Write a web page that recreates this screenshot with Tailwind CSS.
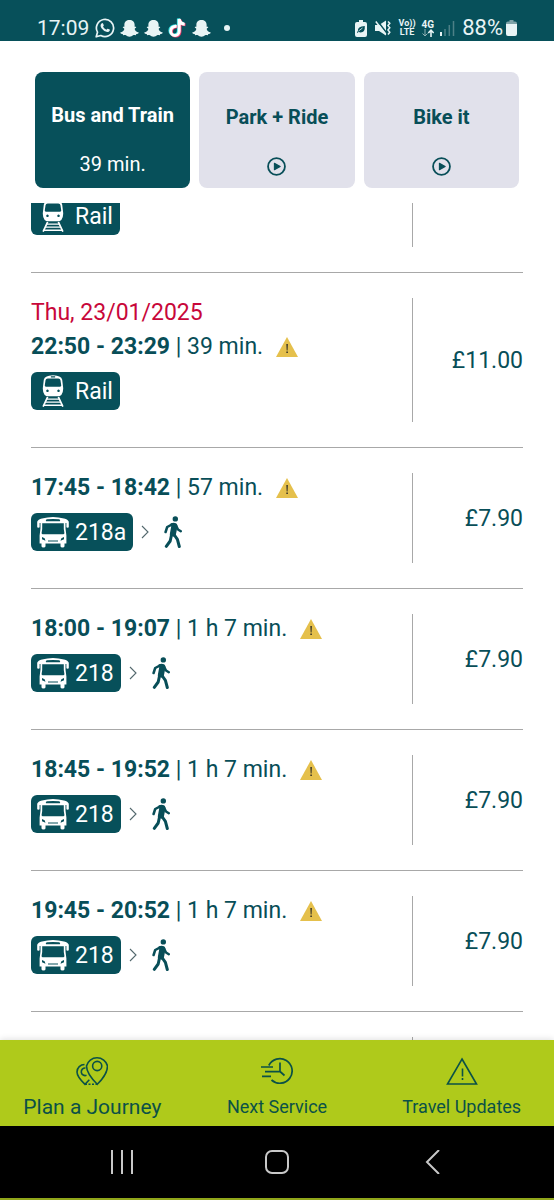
<!DOCTYPE html>
<html lang="en">
<head>
<meta charset="utf-8">
<meta name="viewport" content="width=device-width, initial-scale=1">
<title>Journey results</title>
<script src="https://cdn.jsdelivr.net/npm/@tailwindcss/browser@4"></script>
</head>
<body class="flex h-screen flex-col bg-white font-['Roboto',sans-serif] text-[#084e58]">

<svg class="hidden" aria-hidden="true">
  <symbol id="ghost" viewBox="0 0 20 20"><path fill="currentColor" d="M10 1c3.200 0 5.400 2 5.400 5v2.200c.6.2 1.300-.3 1.600.2.300.8-1.400 1.200-1.600 2 .5 1.900 2 3.200 4.300 3.800.4.900-1.800 1.500-2.500 1.700-.3.500-.2 1-.7 1.100-.8.100-1.700-.3-2.800.2-.9.600-2 1.500-3.700 1.500s-2.800-.9-3.700-1.500c-1.100-.5-2-.1-2.800-.2-.5-.1-.4-.6-.7-1.100-.7-.2-2.900-.8-2.500-1.700 2.300-.6 3.800-1.900 4.300-3.800-.2-.8-1.900-1.200-1.600-2 .3-.5 1 0 1.600-.2V6c0-3 2.200-5 5.400-5z"/></symbol>
  <symbol id="note" viewBox="0 0 18 20"><path fill="none" stroke="currentColor" stroke-width="3" d="M8.500 8.300C4.900 8 2.500 10.300 2.500 13s1.900 4.500 4.300 4.500S11 15.700 11 13V1c.4 3.200 2.500 5 5.500 5.200"/></symbol>
  <symbol id="train" viewBox="0 0 22 33"><path fill="#fff" fill-rule="evenodd" d="M7 .8Q11-.4 15 .8l2.500.7Q20 2.300 20.500 5l1 8.500q.2 4.500-1.900 7Q18.500 22 15.500 22h-9q-3 0-4.100-1.500Q.3 18 .5 13.500L1.500 5Q2 2.300 4.500 1.500zM5.500 3.700Q3.600 3.800 3.300 5.500L2.500 10.800q0 1.200 1.200 1.200h14.600q1.200 0 1.200-1.200l-.8-5.300q-.3-1.700-2.200-1.800zM8.800 1.400v1.200h4.400V1.400zM5.300 15a1.300 1.300 0 1 0 .01 0zM16.700 15a1.300 1.300 0 1 0 .01 0z"/><path fill="none" stroke="#fff" stroke-width="1.700" d="M5.500 22.500.8 32.700M16.500 22.500l4.700 10.200"/><path fill="none" stroke="#fff" stroke-width="1.300" d="M4.500 24.800h13M3 27.900h16M1.300 31.200h19.400"/></symbol>
  <symbol id="bus" viewBox="0 0 32 31"><path fill="#fff" fill-rule="evenodd" d="M5 2Q16-1.200 27 2q4 .8 4.800 3.300V10.500q0 .8-1.200.8t-1.200-.8V6.500h-.9V12l.9 7v8H27.500v2.700q0 1.300-2 1.300t-2-1.300V27h-15v2.700Q8.500 31 6.500 31t-2-1.300V27H2.600v-8l.9-7V6.500h-.9v4q0 .8-1.200.8t-1.200-.8V5.300Q1 2.800 5 2zM10 2.800q-1.200.2-1.200 1.100t1.200.9h12q1.200 0 1.200-.9T22 2.800Q16 2 10 2.800zM5.200 6.700v5.800L4.600 16.500q0 1.200 1.200 1.200h20.400q1.200 0 1.200-1.200l-.6-4V6.700zM5 20.500v2.300l3.500 1.500-.9-2.500zM27 20.500v2.300l-3.500 1.500.9-2.500zM11 24v1h10v-1z"/></symbol>
  <symbol id="walk" viewBox="0 0 18 32"><circle cx="11.300" cy="2.900" r="2.700" fill="currentColor"/><path fill="none" stroke="currentColor" stroke-linejoin="round" stroke-linecap="round" stroke-width="2.500" d="M8.300 8.300 3.200 11 1.600 16M12 9.500l2 4 2.800 1.700"/><path fill="none" stroke="currentColor" stroke-linejoin="round" stroke-linecap="round" stroke-width="3" d="M10 18.500l3.400 4.800 1.900 7.200M7.500 19 6.200 25 2.300 30.300"/><path fill="currentColor" d="M6.500 7.500Q9.500 6 12 7.200 14 8.500 13.200 12l-1.400 7-1 2-4.800-1.500Q5.600 18.500 6 17l1.200-6.500z"/></symbol>
  <symbol id="chev" viewBox="0 0 8 14"><path fill="none" stroke="#53686d" stroke-width="1.100" d="m1 1 6 6-6 6"/></symbol>
  <symbol id="warn" viewBox="0 0 22 20"><path fill="#e5c04c" d="M11 0 22 20H0z"/><path fill="#222" d="M10.400 7h1.400l-.3 6.500h-.8zM10.400 14.500h1.400V16h-1.400z"/></symbol>
  <symbol id="play" viewBox="0 0 18 18"><circle cx="9" cy="9" r="8" fill="none" stroke="currentColor" stroke-width="1.700"/><path fill="currentColor" stroke="currentColor" stroke-linejoin="round" d="M7 6v6l5.500-3z"/></symbol>
</svg>

<header class="flex h-[41px] shrink-0 items-end bg-[#07505a] pr-[37px] pb-px pl-[37px] text-[#e8f4f5]">
  <span class="text-[21px] leading-6">17:09</span>
  <div class="ml-[6px] flex h-6 items-center gap-[5px]">
    <svg class="size-5" viewBox="0 0 20 20" role="img" aria-label="WhatsApp"><path fill="none" stroke="currentColor" stroke-width="1.700" stroke-linejoin="round" d="M1.200 18.800 2.500 14.200A8.600 8.600 0 1 1 5.800 17.500z"/><path fill="currentColor" d="M6.800 5.300q.8-.5 1.200.2l.8 1.800q.1.500-.8 1.400 1.200 2.200 3.400 3.100l1-1q.4-.3 2.300.8.300.3.100.9-.7 1.700-2.600 1.600-3.200-.4-5.700-3.800Q4.500 7 6.800 5.300z"/></svg>
    <svg class="size-[19px]" role="img" aria-label="Snapchat"><use href="#ghost"/></svg>
    <svg class="size-[19px]" role="img" aria-label="Snapchat"><use href="#ghost"/></svg>
    <svg class="h-5 w-[19px]" viewBox="0 0 19 20" role="img" aria-label="TikTok"><use href="#note" x="-.6" y="-.6" width="18" height="20" class="text-[#35e4e4]"/><use href="#note" x="1" y=".6" width="18" height="20" class="text-[#f0386b]"/><use href="#note" x=".2" width="18" height="20" class="text-white"/></svg>
    <svg class="size-[19px]" role="img" aria-label="Snapchat"><use href="#ghost"/></svg>
    <span class="ml-2 size-[6px] rounded-full bg-[#e8f4f5]"></span>
  </div>
  <div class="ml-auto flex h-6 items-center">
    <svg class="h-[17px] w-3" viewBox="0 0 12 17" aria-hidden="true"><path fill="currentColor" d="M4 0h4v2h2q2 0 2 2v11q0 2-2 2H2q-2 0-2-2V4q0-2 2-2h2z"/><path fill="#07505a" d="M9.800 6q.5 6.500-4.200 6.500-1.300 0-1.900-.7L2.500 13l-.6-.8 1-1.100Q2.300 6.500 9.800 6z"/><path stroke="#e8f4f5" stroke-width=".8" d="m3.500 11 4-3"/></svg>
    <svg class="ml-2 h-4 w-4" viewBox="0 0 16 16" aria-hidden="true"><path fill="currentColor" d="M0 5h4l7-4.500v15L4 11H0z"/><path stroke="#07505a" stroke-width="1.500" d="m2.500 1 10 13"/><path fill="none" stroke="currentColor" stroke-width="1.500" d="m.8 1.500 10 13M13 1.500l1.800 1.800L13 5.600l1.800 2.200L13 10l1.800 2.200L13 14.500"/></svg>
    <span class="ml-2 flex flex-col items-center text-[9px] leading-[9px] font-bold"><span>Vo))</span><span>LTE</span></span>
    <span class="ml-[6px] flex flex-col items-center text-[10px] leading-[9px] font-bold"><span>4G</span>
      <svg class="h-2 w-3" viewBox="0 0 12 8" aria-hidden="true"><path fill="none" stroke="#8fb0b4" d="M3 0v7M.5 4.500 3 7l2.500-2.500"/><path fill="none" stroke="currentColor" stroke-width="1.600" d="M9 8V1.500M6.300 4 9 1.200 11.700 4"/></svg>
    </span>
    <svg class="ml-[6px] h-4 w-[15px]" viewBox="0 0 15 16" aria-hidden="true"><path stroke="#e8f4f5" stroke-width="2" d="M1 16v-4"/><path stroke="#4d8087" stroke-width="1.500" d="M5 16V9M9.300 16V5M13.500 16V1"/></svg>
    <span class="ml-[7px] text-[22px] leading-6">88%</span>
    <svg class="ml-[3px] h-4 w-[11px]" viewBox="0 0 11 16" aria-hidden="true"><path fill="#7fa3a8" d="M3.500 0h4v1.500H9q2 0 2 2V5H0V3.500q0-2 2-2h1.500z"/><path fill="currentColor" d="M0 4h11v10q0 2-2 2H2q-2 0-2-2z"/></svg>
  </div>
</header>

<nav class="grid shrink-0 grid-cols-3 gap-[9px] px-[35px] pt-[31px] pb-[15px]" aria-label="Journey types">
  <button class="flex h-[116px] flex-col items-center justify-end rounded-lg bg-[#07505a] pb-3 text-white">
    <span class="text-[20px] leading-6 font-bold">Bus and Train</span>
    <span class="mt-[25px] text-[20px] leading-6">39 min.</span>
  </button>
  <button class="flex h-[116px] flex-col items-center justify-end rounded-lg bg-[#e1e1eb] pb-3">
    <span class="text-[20px] leading-6 font-bold">Park + Ride</span>
    <svg class="mt-[28px] size-[19px]" aria-hidden="true"><use href="#play"/></svg>
  </button>
  <button class="flex h-[116px] flex-col items-center justify-end rounded-lg bg-[#e1e1eb] pb-3">
    <span class="text-[20px] leading-6 font-bold">Bike it</span>
    <svg class="mt-[28px] size-[19px]" aria-hidden="true"><use href="#play"/></svg>
  </button>
</nav>

<main class="min-h-0 flex-1 overflow-hidden px-[31px] text-[23px] leading-[30px]">
  <ul>
    <li class="-mt-[6px] flex border-b border-[#a8a8a8]">
      <div class="flex flex-1 items-start pb-[37px]">
        <span class="flex h-[38px] items-center gap-[6px] rounded-md bg-[#07505a] pr-[7px] pl-[6px] text-white"><svg class="h-8 w-8" aria-hidden="true"><use href="#train"/></svg><span class="pt-px">Rail</span></span>
      </div>
      <div class="mb-[25px] w-px bg-[#a8a8a8]"></div>
      <div class="w-[110px]"></div>
    </li>

    <li class="flex border-b border-[#a8a8a8]">
      <div class="flex-1 pt-[25px] pb-[37px]">
        <p class="mb-1 text-[#c8073a]">Thu, 23/01/2025</p>
        <p class="flex items-center"><span><b>22:50 - 23:29</b> | 39 min.</span><svg class="ml-[13px] h-5 w-[22px]" role="img" aria-label="Warning"><use href="#warn"/></svg></p>
        <div class="mt-[10px] flex items-center">
          <span class="flex h-[38px] items-center gap-[6px] rounded-md bg-[#07505a] pr-[7px] pl-[6px] text-white"><svg class="h-8 w-8" aria-hidden="true"><use href="#train"/></svg><span class="pt-px">Rail</span></span>
        </div>
      </div>
      <div class="my-[25px] w-px bg-[#a8a8a8]"></div>
      <div class="flex w-[110px] items-center justify-end pt-[2px]">£11.00</div>
    </li>

    <li class="flex border-b border-[#a8a8a8]">
      <div class="flex-1 pt-[25px] pb-[37px]">
        <p class="flex items-center"><span><b>17:45 - 18:42</b> | 57 min.</span><svg class="ml-[13px] h-5 w-[22px]" role="img" aria-label="Warning"><use href="#warn"/></svg></p>
        <div class="mt-[10px] flex items-center">
          <span class="flex h-[38px] items-center gap-[6px] rounded-md bg-[#07505a] pr-[7px] pl-[6px] text-white"><svg class="h-8 w-8" aria-hidden="true"><use href="#bus"/></svg><span class="pt-px">218a</span></span>
          <svg class="ml-2 h-[14px] w-2" aria-hidden="true"><use href="#chev"/></svg>
          <svg class="ml-[15px] h-8 w-[18px]" role="img" aria-label="Walk"><use href="#walk"/></svg>
        </div>
      </div>
      <div class="my-[25px] w-px bg-[#a8a8a8]"></div>
      <div class="flex w-[110px] items-center justify-end pt-[2px]">£7.90</div>
    </li>

    <li class="flex border-b border-[#a8a8a8]">
      <div class="flex-1 pt-[25px] pb-[37px]">
        <p class="flex items-center"><span><b>18:00 - 19:07</b> | 1 h 7 min.</span><svg class="ml-[13px] h-5 w-[22px]" role="img" aria-label="Warning"><use href="#warn"/></svg></p>
        <div class="mt-[10px] flex items-center">
          <span class="flex h-[38px] items-center gap-[6px] rounded-md bg-[#07505a] pr-[7px] pl-[6px] text-white"><svg class="h-8 w-8" aria-hidden="true"><use href="#bus"/></svg><span class="pt-px">218</span></span>
          <svg class="ml-2 h-[14px] w-2" aria-hidden="true"><use href="#chev"/></svg>
          <svg class="ml-[15px] h-8 w-[18px]" role="img" aria-label="Walk"><use href="#walk"/></svg>
        </div>
      </div>
      <div class="my-[25px] w-px bg-[#a8a8a8]"></div>
      <div class="flex w-[110px] items-center justify-end pt-[2px]">£7.90</div>
    </li>

    <li class="flex border-b border-[#a8a8a8]">
      <div class="flex-1 pt-[25px] pb-[37px]">
        <p class="flex items-center"><span><b>18:45 - 19:52</b> | 1 h 7 min.</span><svg class="ml-[13px] h-5 w-[22px]" role="img" aria-label="Warning"><use href="#warn"/></svg></p>
        <div class="mt-[10px] flex items-center">
          <span class="flex h-[38px] items-center gap-[6px] rounded-md bg-[#07505a] pr-[7px] pl-[6px] text-white"><svg class="h-8 w-8" aria-hidden="true"><use href="#bus"/></svg><span class="pt-px">218</span></span>
          <svg class="ml-2 h-[14px] w-2" aria-hidden="true"><use href="#chev"/></svg>
          <svg class="ml-[15px] h-8 w-[18px]" role="img" aria-label="Walk"><use href="#walk"/></svg>
        </div>
      </div>
      <div class="my-[25px] w-px bg-[#a8a8a8]"></div>
      <div class="flex w-[110px] items-center justify-end pt-[2px]">£7.90</div>
    </li>

    <li class="flex border-b border-[#a8a8a8]">
      <div class="flex-1 pt-[25px] pb-[37px]">
        <p class="flex items-center"><span><b>19:45 - 20:52</b> | 1 h 7 min.</span><svg class="ml-[13px] h-5 w-[22px]" role="img" aria-label="Warning"><use href="#warn"/></svg></p>
        <div class="mt-[10px] flex items-center">
          <span class="flex h-[38px] items-center gap-[6px] rounded-md bg-[#07505a] pr-[7px] pl-[6px] text-white"><svg class="h-8 w-8" aria-hidden="true"><use href="#bus"/></svg><span class="pt-px">218</span></span>
          <svg class="ml-2 h-[14px] w-2" aria-hidden="true"><use href="#chev"/></svg>
          <svg class="ml-[15px] h-8 w-[18px]" role="img" aria-label="Walk"><use href="#walk"/></svg>
        </div>
      </div>
      <div class="my-[25px] w-px bg-[#a8a8a8]"></div>
      <div class="flex w-[110px] items-center justify-end pt-[2px]">£7.90</div>
    </li>

    <li class="flex h-[140px]">
      <div class="flex-1"></div>
      <div class="my-[25px] w-px bg-[#a8a8a8]"></div>
      <div class="w-[110px]"></div>
    </li>
  </ul>
</main>

<nav class="grid h-[86px] shrink-0 grid-cols-3 bg-[#afca1b] pt-[14px] text-[#0b5147] shadow-[0_-1px_6px_rgba(0,0,0,0.12)]" aria-label="Main">
  <a href="#plan" class="flex flex-col items-center gap-[9px] text-[21px] leading-6 whitespace-nowrap">
    <svg class="h-8 w-8" viewBox="0 0 32 32" fill="none" stroke="currentColor" stroke-width="1.600" aria-hidden="true"><path d="M21.300 30.300C17.500 26.500 10.500 18.500 10.500 12a10.800 10.800 0 0 1 21 0c0 6.500-6.400 14.500-10.200 18.300z"/><circle cx="21.200" cy="12" r="4.600"/><path d="M8.500 10.500C4.500 10.500 1 13.500 1 18c0 4.500 4.500 9 8 12.300l4.300-4.500M9.500 14a3.800 3.800 0 1 0 1 7.300"/><path stroke-dasharray="2 1.500" d="M9 30.300h12"/></svg>
    Plan a Journey
  </a>
  <a href="#next" class="flex flex-col items-center gap-[9px] text-[18px] leading-6 whitespace-nowrap">
    <svg class="h-8 w-8" viewBox="0 0 32 32" fill="none" stroke="currentColor" stroke-width="1.700" aria-hidden="true"><path d="M7.800 11.500A12.300 12.300 0 1 1 10.500 26M19 8.500v9l4.500 4M0 13h12M4 17.600h15M1 22.300h9"/></svg>
    Next Service
  </a>
  <a href="#updates" class="flex flex-col items-center gap-[9px] text-[18px] leading-6 whitespace-nowrap">
    <svg class="h-8 w-8" viewBox="0 0 32 32" fill="none" stroke="currentColor" stroke-width="1.600" aria-hidden="true"><path d="M16 5 30.500 30h-29zM16.500 14.500v8M16.500 24v2"/></svg>
    Travel Updates
  </a>
</nav>

<footer class="grid h-[74px] shrink-0 grid-cols-3 border-b-2 border-[#8fa51a] bg-black px-[45px] text-[#c8c8c8]">
  <button class="flex items-center justify-center" aria-label="Recent apps"><svg class="h-6 w-6" viewBox="0 0 24 24" fill="none" stroke="currentColor" stroke-width="2" aria-hidden="true"><path d="M2 0v24M12 0v24M22 0v24"/></svg></button>
  <button class="flex items-center justify-center" aria-label="Home"><svg class="h-6 w-6" viewBox="0 0 24 24" fill="none" stroke="currentColor" stroke-width="2" aria-hidden="true"><rect x="1" y="1" width="22" height="22" rx="6"/></svg></button>
  <button class="flex items-center justify-center" aria-label="Back"><svg class="h-6 w-6" viewBox="0 0 24 24" fill="none" stroke="currentColor" stroke-width="2" aria-hidden="true"><path d="M19 0 7 12l12 12"/></svg></button>
</footer>
</body>
</html>
